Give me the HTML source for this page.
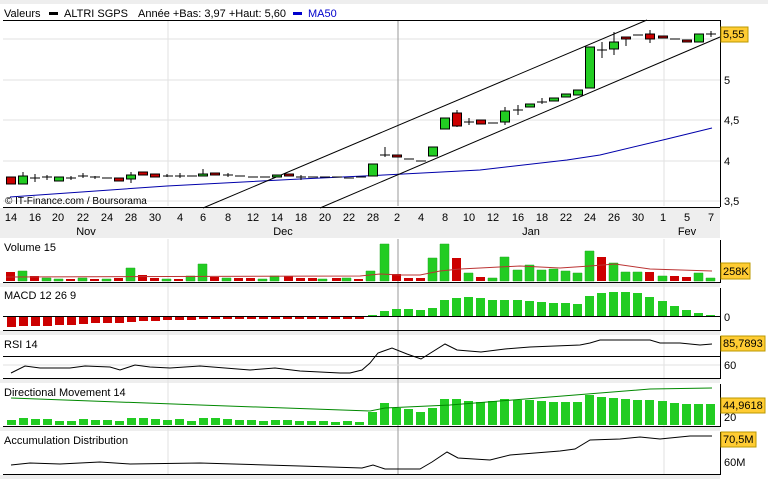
<!DOCTYPE html><html><head><style>body{margin:0;background:#fff;width:768px;height:479px;overflow:hidden;font-family:"Liberation Sans",sans-serif}</style></head><body>
<svg width="768" height="479" xmlns="http://www.w3.org/2000/svg" font-family="Liberation Sans,sans-serif" font-size="11">
<rect width="768" height="479" fill="#fff"/>
<rect width="768" height="4" fill="#eee"/>
<rect y="283" width="720" height="4" fill="#eee"/><rect y="331" width="720" height="4" fill="#eee"/><rect y="379" width="720" height="4" fill="#eee"/><rect y="427" width="720" height="4" fill="#eee"/><rect y="475" width="720" height="4" fill="#eee"/>
<rect y="208" width="720" height="30" fill="#eee"/>
<text x="4" y="17">Valeurs</text><rect x="49" y="12" width="9" height="3" fill="#000"/><text x="64" y="17">ALTRI SGPS</text><text x="138" y="17">Année +Bas: 3,97 +Haut: 5,60</text><rect x="293" y="12" width="9" height="3" fill="#00c"/><text x="308" y="17" fill="#00c">MA50</text>
<line x1="3" y1="20.5" x2="720" y2="20.5" stroke="#000"/>
<g stroke="#e2e2e2"><line x1="3" y1="39" x2="720" y2="39"/><line x1="3" y1="80" x2="720" y2="80"/><line x1="3" y1="120" x2="720" y2="120"/><line x1="3" y1="161" x2="720" y2="161"/><line x1="3" y1="201" x2="720" y2="201"/><line x1="168" y1="21" x2="168" y2="206"/><line x1="664" y1="21" x2="664" y2="206"/></g>
<line x1="398" y1="21" x2="398" y2="206" stroke="#999"/>
<line x1="720.5" y1="20" x2="720.5" y2="207" stroke="#000"/><line x1="3" y1="207.5" x2="720" y2="207.5" stroke="#000"/>
<g font-size="11"><text x="724" y="84">5</text><text x="724" y="124">4,5</text><text x="724" y="165">4</text><text x="724" y="205">3,5</text></g>
<rect x="721" y="27" width="27" height="15" fill="#fc3" stroke="#b90"/><text x="723" y="38">5,55</text>
<polyline fill="none" stroke="#00a" points="10,197 167,186 300,179 384,175 480,170 567,160 600,155 667,139 712,128"/>
<line x1="203" y1="208" x2="647" y2="20" stroke="#000"/><line x1="320" y1="208" x2="720" y2="37" stroke="#000"/>
<text x="5" y="204" font-size="10">© IT-Finance.com / Boursorama</text>
<g stroke="#000" stroke-width="1">
<rect x="6.5" y="177" width="9" height="7" fill="#c00"/>
<line x1="23" y1="172" x2="23" y2="184"/><rect x="18.5" y="176" width="9" height="8" fill="#2c2"/>
<path d="M30 178h10M35 174v8M42 177h10M47 175v5M66 178h10M71 176v4M78 176h10M83 173v5M90 177h10M95 176v3M102 178h10M163 176h10M167 174v3M175 176h10M180 173v5M187 176h10M223 175h10M228 173v4M235 176h10M248 177h10M260 177h10M296 177h10M301 175v5M308 177h10M320 177h10M332 177h10M344 178h10M356 177h10M380 155h10M385 147v10M404 159h10M416 161h10M464 122h10M469 118v7M488 123h10M513 110h10M518 105v10M537 102h10M542 98v6M597 50h10M602 42v16M633 35h10M670 39h10M706 34h10M711 31v6"/>
<rect x="54.5" y="177" width="9" height="4" fill="#2c2"/>
<rect x="114.5" y="178" width="9" height="3" fill="#c00"/>
<line x1="131" y1="172" x2="131" y2="183"/><rect x="126.5" y="175" width="9" height="4" fill="#2c2"/>
<rect x="138.5" y="172" width="9" height="3" fill="#c00"/><rect x="150.5" y="174" width="9" height="3" fill="#c00"/>
<line x1="203" y1="169" x2="203" y2="176"/><rect x="198.5" y="174" width="9" height="2" fill="#2c2"/>
<rect x="210.5" y="173" width="9" height="2" fill="#c00"/>
<rect x="272.5" y="175" width="9" height="2" fill="#2c2"/><rect x="284.5" y="174" width="9" height="2" fill="#c00"/>
<rect x="368.5" y="164" width="9" height="12" fill="#2c2"/>
<rect x="392.5" y="155" width="9" height="2" fill="#c00"/>
<rect x="428.5" y="147" width="9" height="9" fill="#2c2"/>
<rect x="440.5" y="118" width="9" height="11" fill="#2c2"/>
<line x1="457" y1="110" x2="457" y2="127"/><rect x="452.5" y="113" width="9" height="13" fill="#c00"/>
<rect x="476.5" y="120" width="9" height="4" fill="#c00"/>
<line x1="505" y1="107" x2="505" y2="125"/><rect x="500.5" y="111" width="9" height="11" fill="#2c2"/>
<rect x="525.5" y="104" width="9" height="3" fill="#2c2"/><rect x="549.5" y="98" width="9" height="3" fill="#2c2"/><rect x="561.5" y="94" width="9" height="3" fill="#2c2"/><rect x="573.5" y="90" width="9" height="5" fill="#2c2"/>
<rect x="585.5" y="47" width="9" height="41" fill="#2c2"/>
<line x1="614" y1="32" x2="614" y2="55"/><rect x="609.5" y="42" width="9" height="7" fill="#2c2"/>
<line x1="626" y1="37" x2="626" y2="46"/><rect x="621.5" y="37" width="9" height="2" fill="#c00"/>
<line x1="650" y1="30" x2="650" y2="43"/><rect x="645.5" y="34" width="9" height="5" fill="#c00"/>
<rect x="658.5" y="36" width="9" height="2" fill="#c00"/>
<rect x="682.5" y="40" width="9" height="2" fill="#c00"/>
<rect x="694.5" y="34" width="9" height="8" fill="#2c2"/>
</g>
<g font-size="11" text-anchor="middle"><text x="11" y="221">14</text><text x="35" y="221">16</text><text x="58" y="221">20</text><text x="83" y="221">22</text><text x="107" y="221">24</text><text x="131" y="221">28</text><text x="155" y="221">30</text><text x="180" y="221">4</text><text x="203" y="221">6</text><text x="228" y="221">8</text><text x="253" y="221">12</text><text x="277" y="221">14</text><text x="301" y="221">18</text><text x="325" y="221">20</text><text x="349" y="221">22</text><text x="373" y="221">28</text><text x="397" y="221">2</text><text x="421" y="221">4</text><text x="445" y="221">8</text><text x="469" y="221">10</text><text x="493" y="221">12</text><text x="518" y="221">16</text><text x="542" y="221">18</text><text x="566" y="221">22</text><text x="590" y="221">24</text><text x="614" y="221">26</text><text x="638" y="221">30</text><text x="663" y="221">1</text><text x="687" y="221">5</text><text x="711" y="221">7</text><text x="86" y="235">Nov</text><text x="283" y="235">Dec</text><text x="531" y="235">Jan</text><text x="687" y="235">Fev</text></g>
<!-- Volume -->
<g stroke="#e2e2e2"><line x1="168" y1="239" x2="168" y2="474"/><line x1="664" y1="239" x2="664" y2="474"/></g>
<line x1="398" y1="239" x2="398" y2="474" stroke="#999"/>
<text x="4" y="251">Volume 15</text>
<g fill="#2c2" stroke="#2a2" stroke-width=".5">
<path d="M18 271h9v10h-9zM42 278h9v3h-9zM54 279h9v2h-9zM78 278h9v3h-9zM102 279h9v2h-9zM126 268h9v13h-9zM162 279h9v2h-9zM186 276h9v5h-9zM198 264h9v17h-9zM222 278h9v3h-9zM258 279h9v2h-9zM270 276h9v5h-9zM318 279h9v2h-9zM342 278h9v3h-9zM366 271h9v10h-9zM380 244h9v37h-9zM428 258h9v23h-9zM440 244h9v37h-9zM464 273h9v8h-9zM488 278h9v3h-9zM500 257h9v24h-9zM513 270h9v11h-9zM525 265h9v16h-9zM537 270h9v11h-9zM549 269h9v12h-9zM561 271h9v10h-9zM573 273h9v8h-9zM585 251h9v30h-9zM609 263h9v18h-9zM621 272h9v9h-9zM633 272h9v9h-9zM658 276h9v5h-9zM694 273h9v8h-9zM706 278h9v3h-9z"/></g>
<g fill="#c00"><path d="M6 272h9v9h-9zM30 276h9v5h-9zM66 279h9v2h-9zM90 279h9v2h-9zM114 278h9v3h-9zM138 275h9v6h-9zM150 278h9v3h-9zM174 279h9v2h-9zM210 277h9v4h-9zM234 278h9v3h-9zM246 278h9v3h-9zM284 276h9v5h-9zM296 278h9v3h-9zM308 278h9v3h-9zM332 278h9v3h-9zM354 279h9v2h-9zM392 274h9v7h-9zM404 278h9v3h-9zM416 278h9v3h-9zM452 258h9v23h-9zM476 277h9v4h-9zM597 257h9v24h-9zM645 272h9v9h-9zM670 276h9v5h-9zM682 277h9v4h-9z"/></g>
<polyline fill="none" stroke="#b33" points="6,277 360,276 380,274 400,275 420,275 440,271 460,269 480,268 520,266 560,268 590,266 615,264 650,269 712,271"/>
<line x1="3" y1="282.5" x2="720" y2="282.5" stroke="#000"/><line x1="720.5" y1="240" x2="720.5" y2="283" stroke="#000"/>
<rect x="721" y="263" width="29" height="16" fill="#fc3" stroke="#b90"/><text x="723" y="275">258K</text>
<!-- MACD -->
<text x="4" y="299">MACD 12 26 9</text>
<line x1="3" y1="316.5" x2="720" y2="316.5" stroke="#000"/>
<g fill="#c00"><path d="M7 317h9v10h-9zM19 317h9v9h-9zM31 317h9v9h-9zM43 317h9v9h-9zM55 317h9v8h-9zM67 317h9v8h-9zM79 317h9v7h-9zM91 317h9v6h-9zM103 317h9v6h-9zM115 317h9v6h-9zM127 317h9v5h-9zM139 317h9v4h-9zM151 317h9v4h-9zM163 317h9v3h-9zM175 317h9v3h-9zM187 317h9v3h-9zM199 317h9v2h-9zM211 317h9v2h-9zM223 317h9v2h-9zM235 317h9v2h-9zM247 317h9v2h-9zM259 317h9v2h-9zM271 317h9v2h-9zM283 317h9v2h-9zM295 317h9v2h-9zM307 317h9v2h-9zM319 317h9v2h-9zM331 317h9v2h-9zM343 317h9v2h-9zM355 317h9v2h-9z"/></g>
<g fill="#2c2"><path d="M368 315h9v1h-9zM380 311h9v5h-9zM392 309h9v7h-9zM404 309h9v7h-9zM416 310h9v6h-9zM428 308h9v8h-9zM440 300h9v16h-9zM452 298h9v18h-9zM464 297h9v19h-9zM476 298h9v18h-9zM488 300h9v16h-9zM500 300h9v16h-9zM513 300h9v16h-9zM525 301h9v15h-9zM537 302h9v14h-9zM549 303h9v13h-9zM561 303h9v13h-9zM573 304h9v12h-9zM585 296h9v20h-9zM597 293h9v23h-9zM609 292h9v24h-9zM621 292h9v24h-9zM633 293h9v23h-9zM645 297h9v19h-9zM658 301h9v15h-9zM670 306h9v10h-9zM682 310h9v6h-9zM694 313h9v3h-9zM706 315h9v1h-9z"/></g>
<line x1="3" y1="330.5" x2="720" y2="330.5" stroke="#000"/><line x1="720.5" y1="288" x2="720.5" y2="331" stroke="#000"/><text x="724" y="321">0</text>
<!-- RSI -->
<text x="4" y="348">RSI 14</text>
<line x1="3" y1="356.5" x2="720" y2="356.5" stroke="#000"/><line x1="3" y1="365" x2="720" y2="365" stroke="#e2e2e2"/>
<polyline fill="none" stroke="#000" points="11,373 25,366 40,368 70,368 85,366 110,367 120,370 135,365 150,367 170,368 200,366 250,370 275,368 300,371 340,373 350,373 362,370 370,363 378,353 392,348 407,354 421,359 445,344 457,350 481,352 505,349 530,347 580,345 590,343 600,340 630,340 650,340 660,343 680,343 700,345 712,344"/>
<line x1="3" y1="378.5" x2="720" y2="378.5" stroke="#000"/><line x1="720.5" y1="336" x2="720.5" y2="379" stroke="#000"/>
<rect x="721" y="336" width="44" height="15" fill="#fc3" stroke="#b90"/><text x="723" y="347">85,7893</text><text x="724" y="369">60</text>
<!-- DM -->
<text x="4" y="396">Directional Movement 14</text>
<g fill="#2c2"><path d="M7 420h9v5h-9zM19 418h9v7h-9zM31 419h9v6h-9zM43 419h9v6h-9zM55 421h9v4h-9zM67 421h9v4h-9zM79 419h9v6h-9zM91 420h9v5h-9zM103 420h9v5h-9zM115 421h9v4h-9zM127 418h9v7h-9zM139 418h9v7h-9zM151 419h9v6h-9zM163 420h9v5h-9zM175 419h9v6h-9zM187 421h9v4h-9zM199 418h9v7h-9zM211 418h9v7h-9zM223 419h9v6h-9zM235 420h9v5h-9zM247 420h9v5h-9zM259 421h9v4h-9zM271 420h9v5h-9zM283 420h9v5h-9zM295 421h9v4h-9zM307 421h9v4h-9zM319 421h9v4h-9zM331 422h9v3h-9zM343 421h9v4h-9zM355 422h9v3h-9zM368 412h9v13h-9zM380 403h9v22h-9zM392 408h9v17h-9zM404 409h9v16h-9zM416 412h9v13h-9zM428 408h9v17h-9zM440 399h9v26h-9zM452 399h9v26h-9zM464 401h9v24h-9zM476 402h9v23h-9zM488 401h9v24h-9zM500 399h9v26h-9zM513 400h9v25h-9zM525 400h9v25h-9zM537 401h9v24h-9zM549 402h9v23h-9zM561 402h9v23h-9zM573 402h9v23h-9zM585 395h9v30h-9zM597 397h9v28h-9zM609 398h9v27h-9zM621 399h9v26h-9zM633 400h9v25h-9zM645 400h9v25h-9zM658 401h9v24h-9zM670 403h9v22h-9zM682 404h9v21h-9zM694 404h9v21h-9zM706 404h9v21h-9z"/></g>
<polyline fill="none" stroke="#080" points="11,398 200,405 370,411 385,408 450,405 600,393 650,389 712,388"/>
<line x1="3" y1="426.5" x2="720" y2="426.5" stroke="#000"/><line x1="720.5" y1="384" x2="720.5" y2="427" stroke="#000"/>
<rect x="721" y="398" width="44" height="15" fill="#fc3" stroke="#b90"/><text x="723" y="409">44,9618</text><text x="724" y="421">20</text>
<!-- AD -->
<text x="4" y="444">Accumulation Distribution</text>
<polyline fill="none" stroke="#000" points="11,465 30,463 60,464 100,462 130,464 200,463 300,466 362,468 373,465 385,469 420,469 432,462 447,452 458,458 490,460 510,455 560,451 575,449 590,440 620,439 640,437 660,439 690,436 712,436"/>
<line x1="3" y1="474.5" x2="720" y2="474.5" stroke="#000"/><line x1="720.5" y1="432" x2="720.5" y2="475" stroke="#000"/>
<rect x="721" y="432" width="35" height="15" fill="#fc3" stroke="#b90"/><text x="723" y="443">70,5M</text><text x="724" y="466">60M</text>
</svg>
</body></html>
